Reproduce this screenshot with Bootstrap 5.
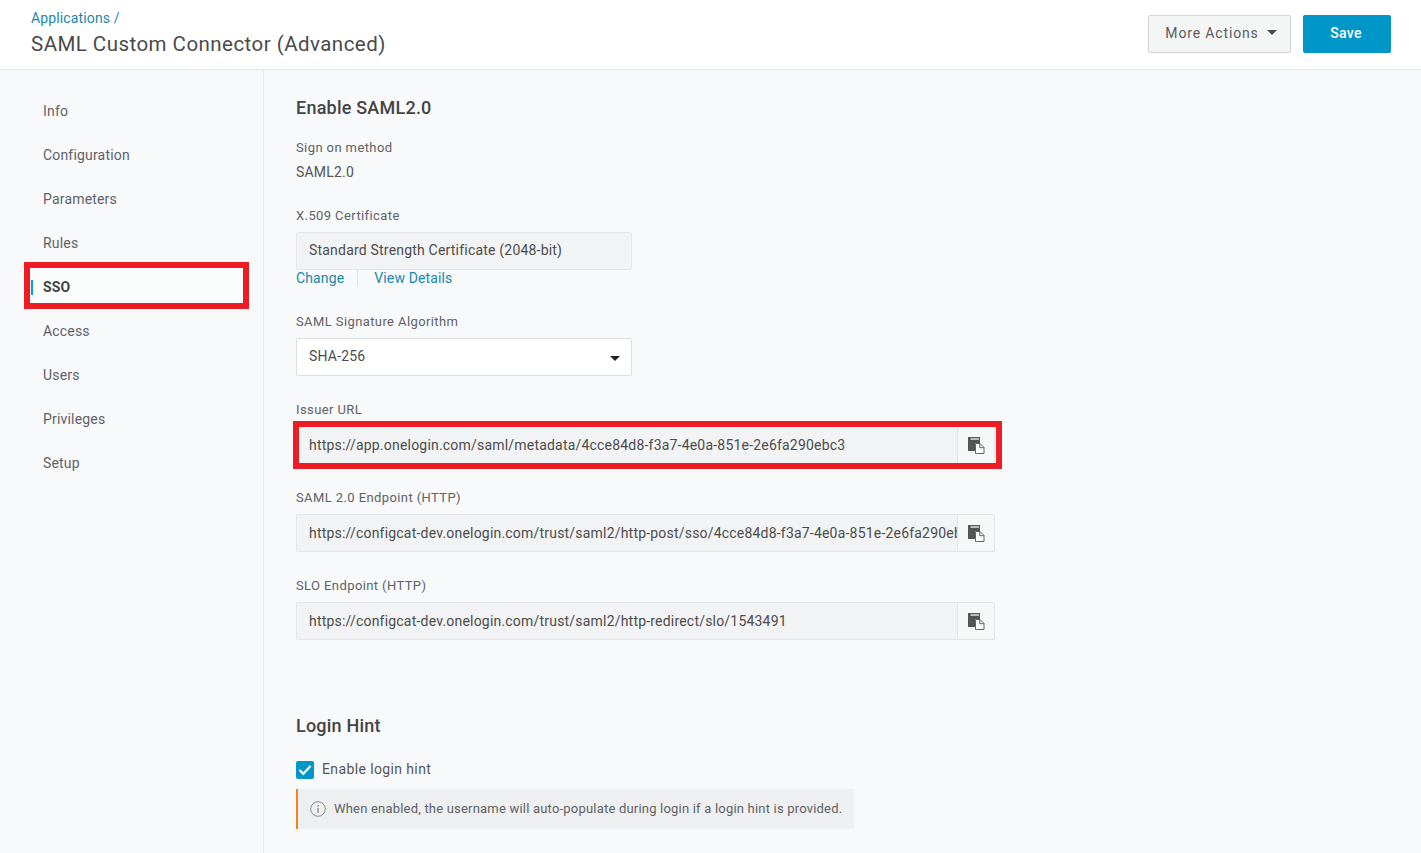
<!DOCTYPE html>
<html lang="en">
<head>
<meta charset="utf-8">
<title>SAML Custom Connector (Advanced)</title>
<link href="https://cdn.jsdelivr.net/npm/bootstrap@5.3.0/dist/css/bootstrap.min.css" rel="stylesheet">
<style>
html,body{height:853px;overflow:hidden}
body{font-family:Roboto,"Liberation Sans",sans-serif;background:#f8f9fb;color:#4c4c4c;font-size:14px}
a{color:#1b87ab;text-decoration:none}
.top-head{height:70px;background:#fff;border-bottom:1px solid #e4e6e8;padding:0 30px 0 31px}
.crumb{font-size:14px;line-height:18px;margin-top:9px;color:#1b87ab;letter-spacing:.13px}
.page-title{font-size:20.5px;font-weight:400;line-height:30px;margin:2px 0 0;color:#4a4a4a;letter-spacing:.46px}
.btn-zone{padding-top:15px}
.more-btn{width:143px;height:38px;background:#f4f5f5;border:1px solid #d3d5d6;border-radius:2px;color:#5c5c5c;font-size:14px;letter-spacing:.85px;padding:0 0 2px 3px;margin-right:12px}
.more-btn::after{border-top-color:#4a4a4a;margin-left:8px;vertical-align:.15em;border-top-width:5px;border-left-width:5px;border-right-width:5px}
.save-btn{width:88px;height:38px;background:#0096c8;border:0;border-radius:2px;color:#fff;font-weight:500;font-size:14px;letter-spacing:.3px;padding:0 2px 2px 0}
.main-row{height:783px}
.side-col{width:264px;flex:none;border-right:1px solid #e9ebed;padding:19px 0 0 31px}
.side-item{display:block;height:44px;line-height:44px;padding-left:12px;color:#5f6266;font-size:14px;letter-spacing:.18px;position:relative;margin-right:20px}
.side-on{background:#fbfcfc;color:#444;font-weight:700;letter-spacing:.1px}
.side-on::before{content:"";position:absolute;left:0;top:15px;width:2px;height:15px;background:#0aa0d6}
.mark-box{position:absolute;border:6px solid #ee1c25;pointer-events:none}
.mark-a{left:-7px;top:-3px;width:225px;height:47px}
.content-col{padding:27px 0 0 32px}
.sect-title{font-size:18px;font-weight:500;line-height:22px;margin:0;color:#444;letter-spacing:.22px}
.fld-label{font-size:13px;line-height:16px;color:#5f6266;letter-spacing:.4px;margin:0}
.val-text{line-height:18px;font-size:14px;margin-top:7px;letter-spacing:.2px;color:#555}
.w-cert{width:336px}
.ro-box{height:38px;background:#f2f3f4;border:1px solid #e5e7e8;border-radius:2px;line-height:34px;padding:0 12px;font-size:14px;color:#4c4c4c;letter-spacing:.2px;white-space:nowrap;overflow:hidden}
.sel-box{height:38px;background:#fff;border:1px solid #dcdee0;border-radius:2px;padding:0 11px 1px 12px;font-size:14px;color:#4c4c4c;letter-spacing:.2px}
.sel-caret{width:0;height:0;border-left:5px solid transparent;border-right:5px solid transparent;border-top:5px solid #222;margin-top:3px}
.link-line{line-height:18px;margin-top:-1px;font-size:14px;letter-spacing:.13px}
.link-line a+a{border-left:1px solid #e4e6e8;margin-left:13px;padding-left:16px;display:inline-block;height:18px}
.url-wrap{width:699px;height:38px;position:relative}
.url-wrap .ro-box{flex:1;border-right:0;border-radius:2px 0 0 2px;min-width:0;line-height:36px}
.copy-btn{width:38px;height:38px;flex:none;background:#f6f7f7;border:1px solid #e1e3e4;border-radius:0 2px 2px 0;display:flex;align-items:center;justify-content:center;padding:0 0 0 1px}
.mark-b{left:-3px;top:-5px;width:709px;height:48px}
.chk-box{width:18px;height:18px;background:#0096c8;border-radius:2px;display:flex;align-items:center;justify-content:center}
.chk-text{font-size:14px;letter-spacing:.38px;color:#555}
.hint-box{width:558px;height:40px;background:#eeeff0;border-left:2px solid #f5821f;padding-left:12px;font-size:13px;color:#5f6266;letter-spacing:.2px;gap:8px}
.gap-a{margin-top:21px}.gap-b{margin-top:26px}.gap-c{margin-top:27px}.gap-f{margin-top:27px}
.gap-d{margin-top:8px}.gap-e{margin-top:75px}.gap-g{margin-top:22px}.gap-h{margin-top:9px}
</style>
</head>
<body>
<header class="top-head d-flex justify-content-between">
  <div>
    <div class="crumb"><a href="#">Applications</a> /</div>
    <h1 class="page-title">SAML Custom Connector (Advanced)</h1>
  </div>
  <div class="d-flex align-items-start btn-zone">
    <button class="btn more-btn dropdown-toggle" type="button">More Actions</button>
    <button class="btn save-btn" type="button">Save</button>
  </div>
</header>
<div class="d-flex main-row">
  <nav class="side-col">
    <a class="side-item" href="#">Info</a>
    <a class="side-item" href="#">Configuration</a>
    <a class="side-item" href="#">Parameters</a>
    <a class="side-item" href="#">Rules</a>
    <a class="side-item side-on" href="#">SSO<span class="mark-box mark-a"></span></a>
    <a class="side-item" href="#">Access</a>
    <a class="side-item" href="#">Users</a>
    <a class="side-item" href="#">Privileges</a>
    <a class="side-item" href="#">Setup</a>
  </nav>
  <main class="content-col flex-grow-1">
    <h2 class="sect-title">Enable SAML2.0</h2>
    <p class="fld-label gap-a">Sign on method</p>
    <div class="val-text">SAML2.0</div>
    <p class="fld-label gap-c">X.509 Certificate</p>
    <div class="ro-box w-cert gap-d">Standard Strength Certificate (2048-bit)</div>
    <div class="link-line"><a href="#">Change</a><a href="#">View Details</a></div>
    <p class="fld-label gap-f">SAML Signature Algorithm</p>
    <div class="sel-box w-cert gap-d d-flex justify-content-between align-items-center"><span>SHA-256</span><span class="sel-caret"></span></div>
    <p class="fld-label gap-b">Issuer URL</p>
    <div class="url-wrap d-flex gap-d">
      <div class="ro-box">https://app.onelogin.com/saml/metadata/4cce84d8-f3a7-4e0a-851e-2e6fa290ebc3</div>
      <button class="copy-btn" type="button" aria-label="Copy"><svg width="17" height="17" viewBox="0 0 17 17"><path fill="#555" d="M0 0H12V6H7V14H0z"/><rect x="2.500" y="1" width="8.500" height="2" fill="#bbb"/><path fill="#f9fafa" stroke="#666" stroke-width="1" d="M7.500 6.500h4.500l4 4v6H7.500z"/><path fill="none" stroke="#666" stroke-width="1" d="M11.800 6.500v4.200h4.200"/></svg></button>
      <span class="mark-box mark-b"></span>
    </div>
    <p class="fld-label gap-b">SAML 2.0 Endpoint (HTTP)</p>
    <div class="url-wrap d-flex gap-d">
      <div class="ro-box">https://configcat-dev.onelogin.com/trust/saml2/http-post/sso/4cce84d8-f3a7-4e0a-851e-2e6fa290ebc3</div>
      <button class="copy-btn" type="button" aria-label="Copy"><svg width="17" height="17" viewBox="0 0 17 17"><path fill="#555" d="M0 0H12V6H7V14H0z"/><rect x="2.500" y="1" width="8.500" height="2" fill="#bbb"/><path fill="#f9fafa" stroke="#666" stroke-width="1" d="M7.500 6.500h4.500l4 4v6H7.500z"/><path fill="none" stroke="#666" stroke-width="1" d="M11.800 6.500v4.200h4.200"/></svg></button>
    </div>
    <p class="fld-label gap-b">SLO Endpoint (HTTP)</p>
    <div class="url-wrap d-flex gap-d">
      <div class="ro-box">https://configcat-dev.onelogin.com/trust/saml2/http-redirect/slo/1543491</div>
      <button class="copy-btn" type="button" aria-label="Copy"><svg width="17" height="17" viewBox="0 0 17 17"><path fill="#555" d="M0 0H12V6H7V14H0z"/><rect x="2.500" y="1" width="8.500" height="2" fill="#bbb"/><path fill="#f9fafa" stroke="#666" stroke-width="1" d="M7.500 6.500h4.500l4 4v6H7.500z"/><path fill="none" stroke="#666" stroke-width="1" d="M11.800 6.500v4.200h4.200"/></svg></button>
    </div>
    <h2 class="sect-title gap-e">Login Hint</h2>
    <div class="d-flex align-items-center gap-2 gap-g">
      <span class="chk-box"><svg width="14" height="12" viewBox="0 0 14 12"><path d="M1.500 6l3.800 3.800L12.500 2" fill="none" stroke="#fff" stroke-width="2.200"/></svg></span>
      <span class="chk-text">Enable login hint</span>
    </div>
    <div class="hint-box d-flex align-items-center gap-h">
      <svg width="16" height="16" viewBox="0 0 16 16"><circle cx="8" cy="8" r="7.300" fill="none" stroke="#8a8c8e" stroke-width="1"/><rect x="7.300" y="6.800" width="1.400" height="5" fill="#8a8c8e"/><rect x="7.300" y="4" width="1.400" height="1.600" fill="#8a8c8e"/></svg>
      <span>When enabled, the username will auto-populate during login if a login hint is provided.</span>
    </div>
  </main>
</div>
</body>
</html>
